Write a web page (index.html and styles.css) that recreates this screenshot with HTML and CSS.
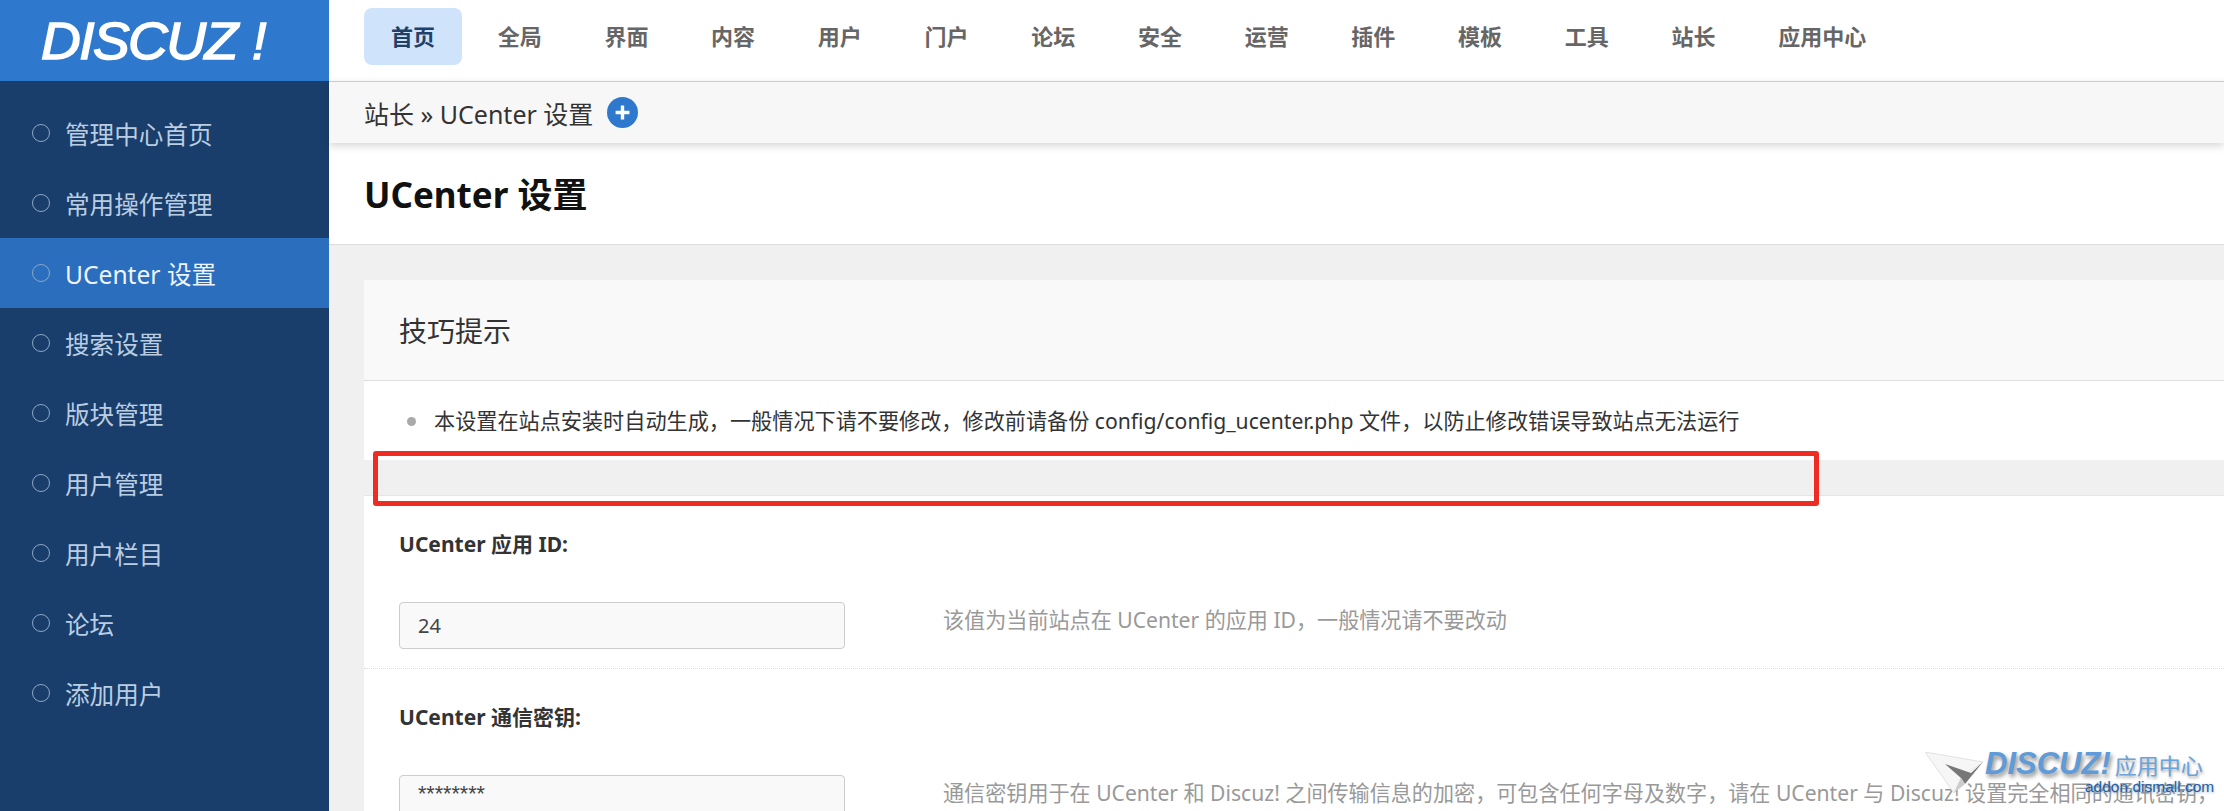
FILE: index.html
```html
<!DOCTYPE html>
<html lang="zh-CN">
<head>
    <meta charset="UTF-8">
    <meta name="viewport" content="width=device-width, initial-scale=1.0">
    <title>UCenter 设置</title>
    <link rel="stylesheet" href="styles.css">
</head>
<body>
    <aside class="sidebar">
        <div class="logo"><span class="logo-word">DISCUZ</span><span class="logo-mark">!</span></div>
        <ul class="side-menu">
            <li>管理中心首页</li>
            <li>常用操作管理</li>
            <li class="active">UCenter 设置</li>
            <li>搜索设置</li>
            <li>版块管理</li>
            <li>用户管理</li>
            <li>用户栏目</li>
            <li>论坛</li>
            <li>添加用户</li>
        </ul>
    </aside>

    <div class="main">
        <nav class="top-nav">
            <a class="active">首页</a>
            <a>全局</a>
            <a>界面</a>
            <a>内容</a>
            <a>用户</a>
            <a>门户</a>
            <a>论坛</a>
            <a>安全</a>
            <a>运营</a>
            <a>插件</a>
            <a>模板</a>
            <a>工具</a>
            <a>站长</a>
            <a>应用中心</a>
        </nav>

        <div class="crumb">
            <span>站长 » UCenter 设置</span>
            <span class="crumb-add">
                <svg viewBox="0 0 16 16" width="17" height="17"><path d="M8 1.5v13M1.5 8h13" stroke="#fff" stroke-width="3.2" fill="none"/></svg>
            </span>
        </div>

        <div class="page-title"><h1>UCenter 设置</h1></div>

        <div class="content">
            <section class="card">
                <div class="card-head">技巧提示</div>
                <ul class="tips">
                    <li>本设置在站点安装时自动生成，一般情况下请不要修改，修改前请备份 config/config_ucenter.php 文件，以防止修改错误导致站点无法运行</li>
                </ul>
                <div class="band"></div>

                <div class="form-row">
                    <label>UCenter 应用 ID:</label>
                    <div class="field">
                        <div class="input">24</div>
                        <p class="hint">该值为当前站点在 UCenter 的应用 ID，一般情况请不要改动</p>
                    </div>
                </div>
                <div class="form-row">
                    <label>UCenter 通信密钥:</label>
                    <div class="field">
                        <div class="input secret">********</div>
                        <p class="hint">通信密钥用于在 UCenter 和 Discuz! 之间传输信息的加密，可包含任何字母及数字，请在 UCenter 与 Discuz! 设置完全相同的通讯密钥，</p>
                    </div>
                </div>
            </section>
        </div>
    </div>

    <!-- red annotation drawn over the screenshot -->
    <div class="mark-box"></div>

    <div class="watermark">
        <svg class="wm-plane" viewBox="0 0 60 42" width="60" height="42">
            <path d="M0 0L58 10L36 26L29 41Z" fill="#f6f6f6" stroke="#e2e2e2" stroke-width="1"/>
            <path d="M20 12L46 21L58 10L40 32L36 26Z" fill="#777"/>
            <path d="M36 26L29 41L40 32Z" fill="#ccc"/>
        </svg>
        <div class="wm-text">
            <div class="wm-top"><span class="wm-brand">DISCUZ!</span><span class="wm-cn">应用中心</span></div>
            <div class="wm-url">addon.dismall.com</div>
        </div>
    </div>
</body>
</html>
```

FILE: styles.css
```css
* {
    box-sizing: border-box;
}
html, body {
    height: 811px;
    overflow: hidden;
}
body {
    margin: 0;
    display: flex;
    position: relative;
    background: #f0f0f0;
    font-family: "Noto Sans", "Noto Sans CJK SC", sans-serif;
    color: #333;
}

/* sidebar */
.sidebar {
    width: 329px;
    flex-shrink: 0;
    background: #1a3e6b;
}
.logo {
    height: 81px;
    background: #2e79cd;
    padding-left: 41px;
    display: flex;
    align-items: center;
    color: #fff;
    font-family: "Liberation Sans", sans-serif;
    font-style: italic;
    font-size: 52px;
    -webkit-text-stroke: 1.5px #fff;
}
.logo-word {
    display: inline-block;
    width: 211px;
    letter-spacing: -1.5px;
    transform: scaleX(1.06);
    transform-origin: left center;
}
.side-menu {
    list-style: none;
    margin: 0;
    padding: 17px 0 0;
}
.side-menu li {
    height: 70px;
    display: flex;
    align-items: center;
    gap: 15px;
    padding-left: 32px;
    font-size: 24.6px;
    color: #b9cde3;
}
.side-menu li::before {
    content: "";
    width: 16px;
    height: 16px;
    border: 1px solid #8da7c4;
    border-radius: 50%;
}
.side-menu li.active {
    background: #2a6ebd;
    color: #eef4fb;
}

/* top */
.main {
    flex: 1;
    min-width: 0;
}
.top-nav {
    height: 81px;
    background: #fff;
    padding: 8px 0 0 35px;
    display: flex;
    gap: 8.7px;
}
.top-nav a {
    height: 57px;
    line-height: 57px;
    padding: 0 27px;
    border-radius: 8px;
    font-size: 22px;
    font-weight: bold;
    color: #666;
}
.top-nav a.active {
    background: #cfe3fb;
    color: #1f4068;
}
.crumb {
    height: 62px;
    background: #f7f7f7;
    border-top: 1px solid #ccc;
    padding-left: 35px;
    display: flex;
    align-items: center;
    gap: 14px;
    font-size: 25px;
    color: #333;
    box-shadow: 0 3px 8px rgba(0, 0, 0, 0.16);
    position: relative;
}
.crumb-add {
    width: 31px;
    height: 31px;
    border-radius: 50%;
    background: #2e79cd;
    display: flex;
    align-items: center;
    justify-content: center;
}
.page-title {
    height: 102px;
    background: #fff;
    border-bottom: 1px solid #ddd;
    padding: 0 0 2px 35px;
    display: flex;
    align-items: center;
}
.page-title h1 {
    margin: 0;
    font-size: 35px;
    color: #111;
}

/* card */
.content {
    padding: 35px 0 0 35px;
}
.card {
    background: #fff;
}
.card-head {
    height: 101px;
    background: #f9f9f9;
    border-bottom: 1px solid #ddd;
    padding-left: 35px;
    display: flex;
    align-items: center;
    font-size: 28px;
    color: #333;
}
.tips {
    list-style: none;
    margin: 0;
    height: 79px;
    padding: 20px 0 0 43px;
    font-size: 21.15px;
    line-height: 40px;
    color: #333;
}
.tips li {
    display: flex;
    align-items: center;
    gap: 18px;
}
.tips li::before {
    content: "";
    width: 9px;
    height: 9px;
    border-radius: 50%;
    background: #aaa;
}
.band {
    height: 36px;
    background: #f0f0f0;
    border-bottom: 1px solid #e6e6e6;
}
.form-row {
    padding: 30px 0 19px 35px;
    border-bottom: 1px dotted #ddd;
}
.form-row label {
    display: block;
    height: 46px;
    line-height: 36px;
    font-size: 21px;
    font-weight: bold;
    color: #333;
}
.field {
    margin-top: 30px;
    display: flex;
    align-items: flex-start;
    gap: 98px;
}
.input {
    width: 446px;
    height: 47px;
    flex-shrink: 0;
    padding-left: 18px;
    line-height: 45px;
    background: #f9f9f9;
    border: 1px solid #ccc;
    border-radius: 4px;
    font-size: 20px;
    color: #444;
}
.secret {
    font-family: "Liberation Sans", sans-serif;
    font-size: 21.5px;
    line-height: 36px;
}
.hint {
    margin: 0;
    line-height: 36px;
    font-size: 21.1px;
    color: #999;
    white-space: nowrap;
}

/* overlays */
.mark-box {
    position: absolute;
    left: 373px;
    top: 451px;
    width: 1446px;
    height: 55px;
    border: 5px solid #ee2c22;
    border-radius: 3px;
}
.watermark {
    position: absolute;
    left: 1925px;
    top: 750px;
    display: flex;
}
.wm-plane {
    margin-top: 2px;
}
.wm-text {
    width: 239px;
}
.wm-top {
    display: flex;
    align-items: center;
    height: 28px;
    gap: 4px;
    white-space: nowrap;
}
.wm-brand {
    font-family: "Liberation Sans", sans-serif;
    font-style: italic;
    font-weight: bold;
    font-size: 31px;
    color: #5f9bd8;
    text-shadow: 2px 3px 4px rgba(0, 0, 0, 0.45);
}
.wm-cn {
    font-size: 22px;
    color: #6ba2dc;
    text-shadow: 1px 2px 3px rgba(0, 0, 0, 0.35);
}
.wm-url {
    padding-left: 100px;
    font-family: "Liberation Sans", sans-serif;
    font-size: 15.5px;
    line-height: 18px;
    color: #2a5f9c;
    text-shadow: 0 1px 3px rgba(90, 140, 200, 0.7);
}
```
